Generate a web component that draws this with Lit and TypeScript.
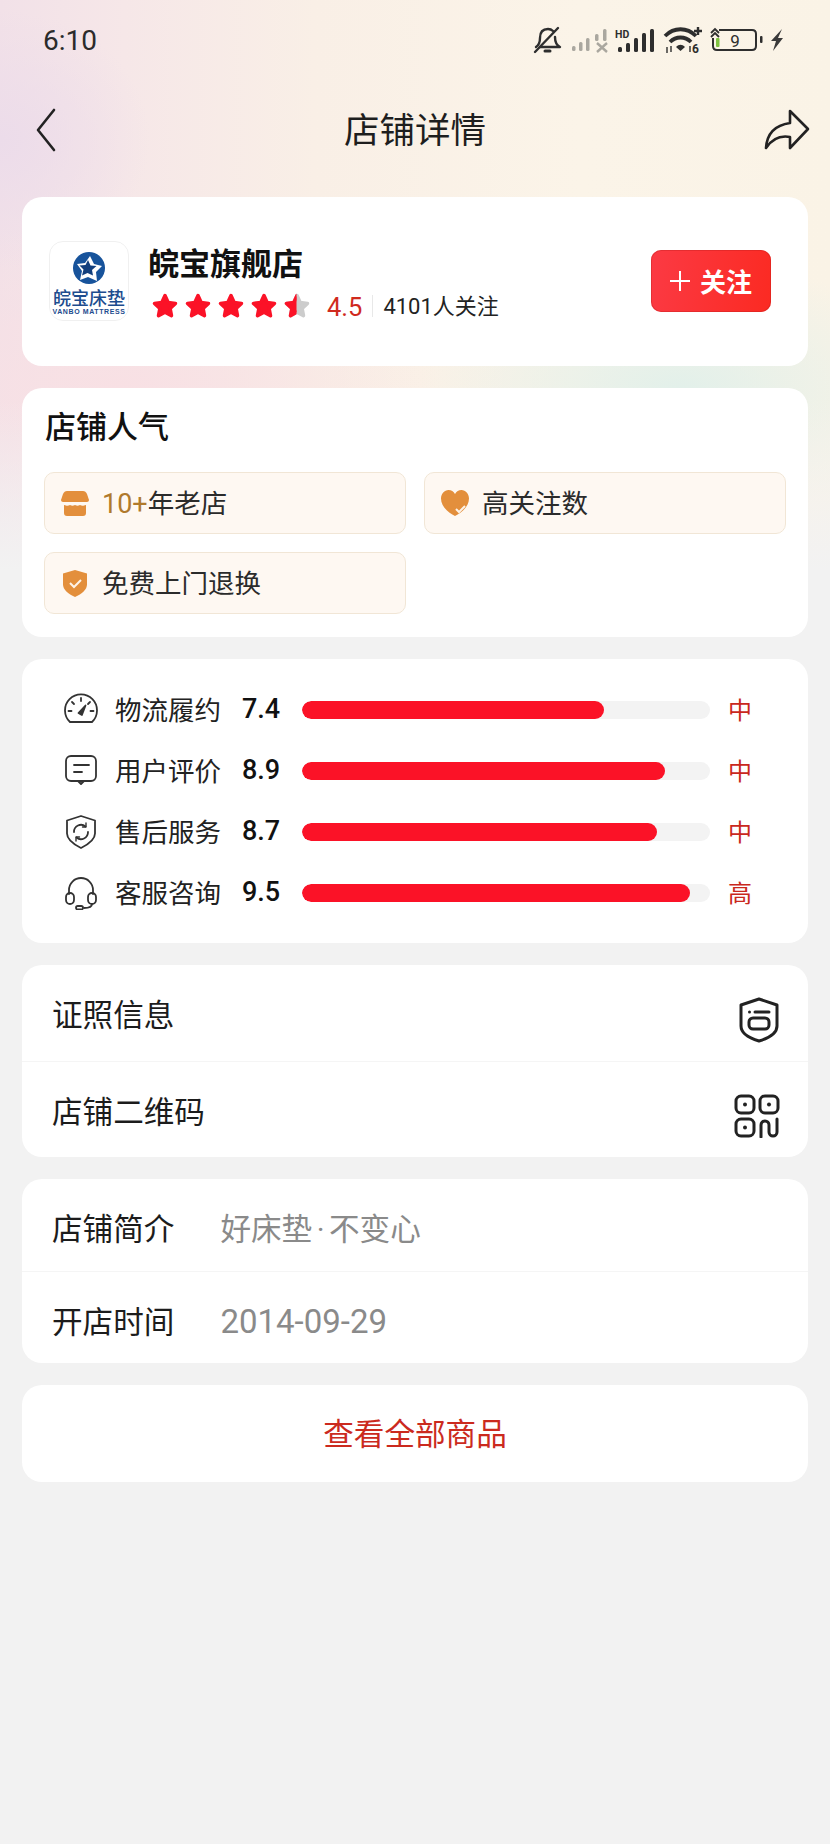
import { LitElement, html, css, svg } from 'lit';
import { customElement } from 'lit/decorators.js';

const STAR = 'M14 3.500l3.200 7 7.300.9-5.400 5 1.400 7.300-6.500-3.600-6.500 3.600 1.400-7.300-5.400-5 7.300-.9z';

const metricIcons = [
  svg`<path d="M6 29a16 16 0 1 1 22 0z" /><path d="M17 5v3M4.500 18h3M29.500 18h-3M8 9l2 2M26 9l-2 2" /><path d="M14.500 20l7-7.500-3.600 9.500z" fill="#333" />`,
  svg`<rect x="2" y="2" width="30" height="25" rx="5" /><path d="M10 11h15M10 18h8" /><path d="M14 27l3 3 3-3" />`,
  svg`<path d="M17 1l14 4.500v13c0 6-7 11-14 14.500-7-3.500-14-8.500-14-14.500v-13z" /><path d="M10 17a7 7 0 0 1 11.500-5.500M24 17a7 7 0 0 1-11.500 5.500" /><path d="M22 8v4h-3.500M12 26v-4h3.500" stroke-width="1.400" />`,
  svg`<path d="M5 18v-4a12 12 0 0 1 24 0v4" /><rect x="2" y="17" width="8" height="11" rx="4" /><rect x="24" y="17" width="8" height="11" rx="4" /><path d="M28 28c0 3-3 4-8 4" /><rect x="12" y="30" width="7" height="3.500" rx="1.750" />`,
];

const metrics = [
  { name: '物流履约', score: '7.4', pct: 74, level: '中' },
  { name: '用户评价', score: '8.9', pct: 89, level: '中' },
  { name: '售后服务', score: '8.7', pct: 87, level: '中' },
  { name: '客服咨询', score: '9.5', pct: 95, level: '高' },
];

@customElement('app-root')
export class AppRoot extends LitElement {
  static styles = css`
    :host {
      display: block;
      min-height: 1844px;
      font-family: 'Noto Sans CJK SC', 'Noto Sans', sans-serif;
      color: #1c1c1c;
      background:
        linear-gradient(to bottom, rgba(242, 242, 242, 0) 400px, #f2f2f2 570px),
        radial-gradient(150px 130px at 0 140px, #ecdcea, rgba(236, 220, 234, 0)),
        radial-gradient(260px 130px at 680px 390px, #e2f0ea, rgba(226, 240, 234, 0)),
        radial-gradient(320px 170px at 120px 390px, #f8e0e4, rgba(248, 224, 228, 0)),
        linear-gradient(90deg, #f2e1e8 0, #f6e7e8 15%, #f9efe6 38%, #fbf4e8 70%, #faf3e6 100%);
    }
    .status {
      height: 70px;
      display: flex;
      align-items: center;
      justify-content: space-between;
      padding: 0 30px 0 43px;
    }
    .time {
      font: 400 28px Roboto, sans-serif;
      color: #2b2b2b;
      margin-top: 11px;
    }
    .status-icons {
      display: block;
    }
    .nav {
      height: 120px;
      margin-bottom: 7px;
      padding: 0 20px;
      display: grid;
      grid-template-columns: 1fr auto 1fr;
      align-items: center;
    }
    .nav svg:first-child {
      margin-left: 14px;
    }
    .nav svg:last-child {
      justify-self: end;
    }
    .nav h1 {
      margin: 0;
      padding-bottom: 4px;
      font-size: 35.500px;
      font-weight: 400;
      line-height: 1;
      color: #1e1e1e;
    }
    .cards {
      display: flex;
      flex-direction: column;
      gap: 22px;
      padding: 0 22px;
    }
    .card {
      background: #fff;
      border-radius: 20px;
      overflow: hidden;
    }
    .shop {
      height: 169px;
      box-sizing: border-box;
      padding: 0 37px 2px 27px;
      display: flex;
      align-items: center;
    }
    .logo {
      width: 80px;
      height: 80px;
      box-sizing: border-box;
      border: 1px solid #f0f0f0;
      border-radius: 14px;
      display: flex;
      flex-direction: column;
      align-items: center;
      color: #1d4c8e;
      flex: none;
    }
    .logo svg {
      display: block;
      margin-top: 9px;
    }
    .logo-cn {
      font-size: 18px;
      font-weight: 500;
      line-height: 20px;
      margin-top: 2px;
      white-space: nowrap;
    }
    .logo-en {
      font: 700 7px/9px 'Liberation Sans', sans-serif;
      letter-spacing: 0.6px;
      white-space: nowrap;
    }
    .shop-info {
      margin-left: 19px;
      flex: 1;
    }
    .shop-name {
      font-size: 31px;
      font-weight: 700;
      line-height: 40px;
      color: #111;
    }
    .rating {
      display: flex;
      align-items: center;
      height: 34px;
      margin: 7px 0 -3px;
    }
    .stars {
      display: flex;
      gap: 5px;
      margin-left: 3px;
    }
    .stars svg {
      display: block;
    }
    .rate {
      font: 400 25.500px Roboto, sans-serif;
      color: #d02a1e;
      margin-left: 16px;
      padding-top: 3px;
    }
    .sep {
      width: 1px;
      height: 22px;
      background: #e8e8e8;
      margin: 0 10px;
    }
    .fans {
      font-size: 22px;
      color: #222;
      padding-bottom: 4px;
    }
    .fans b {
      font: 400 22px Roboto, sans-serif;
    }
    .follow {
      width: 120px;
      height: 62px;
      border: 0;
      padding: 0;
      border-radius: 10px;
      background: linear-gradient(100deg, #fb3a44, #fb2a22);
      box-shadow: inset 0 0 0 1px rgba(190, 30, 30, 0.35);
      color: #fff;
      font-family: inherit;
      font-size: 26px;
      font-weight: 700;
      display: flex;
      align-items: center;
      justify-content: center;
      gap: 10px;
    }
    .popular {
      height: 249px;
      box-sizing: border-box;
      padding: 22px 22px 0;
    }
    .popular h2 {
      margin: -2px 0 30px 1px;
      font-size: 31px;
      font-weight: 500;
      line-height: 34px;
      color: #111;
    }
    .tags {
      display: grid;
      grid-template-columns: 1fr 1fr;
      gap: 18px;
    }
    .tag {
      height: 62px;
      box-sizing: border-box;
      border: 1px solid #f1e6d6;
      border-radius: 10px;
      background: #fef8f2;
      display: flex;
      align-items: center;
      padding-left: 16px;
      gap: 13px;
      font-size: 26.500px;
      color: #2b2b2b;
    }
    .tag svg {
      flex: none;
    }
    .tag span {
      padding-bottom: 4px;
    }
    .tag em {
      font: 400 27px Roboto, sans-serif;
      color: #b07a2c;
    }
    .metrics {
      height: 284px;
      box-sizing: border-box;
      padding: 20px 0 20px 42px;
    }
    .metric {
      height: 61px;
      display: flex;
      align-items: center;
    }
    .metric svg {
      flex: none;
      fill: none;
      stroke: #333;
      stroke-width: 1.800;
      stroke-linecap: round;
      stroke-linejoin: round;
    }
    .metric-name {
      width: 106px;
      margin-left: 17px;
      padding-bottom: 2px;
      font-size: 26.500px;
      color: #222;
      white-space: nowrap;
    }
    .metric-score {
      width: 60px;
      margin-left: 21px;
      padding-bottom: 2px;
      font: 500 27px Roboto, sans-serif;
      color: #111;
    }
    .track {
      width: 408px;
      height: 18px;
      border-radius: 9px;
      background: #f3f3f3;
      overflow: hidden;
    }
    .fill {
      height: 100%;
      border-radius: 9px;
      background: #fb1227;
    }
    .metric-level {
      margin-left: 18px;
      padding-bottom: 2px;
      font-size: 24px;
      color: #c9281d;
    }
    .row {
      box-sizing: border-box;
      display: flex;
      align-items: center;
      padding: 0 28px 0 30px;
      font-size: 30.600px;
      color: #1c1c1c;
      justify-content: space-between;
    }
    .row + .row {
      border-top: 1px solid #f5f5f5;
    }
    .row-link {
      height: 96px;
    }
    .row-link svg {
      margin-top: 13px;
    }
    .row-info {
      height: 92px;
      padding-top: 4px;
      justify-content: flex-start;
    }
    .row-value {
      margin-left: 46px;
      color: #8a8a8a;
    }
    .row-value i {
      font: 400 30px Roboto, sans-serif;
      margin: 0 4.500px;
    }
    .row-value.num {
      font: 400 33px Roboto, sans-serif;
      padding-top: 4px;
    }
    .all {
      height: 97px;
      padding-bottom: 4px;
      box-sizing: border-box;
      display: flex;
      align-items: center;
      justify-content: center;
      font-size: 30.600px;
      color: #cb2a1e;
    }
  `;

  private renderStatusIcons() {
    return html`<svg class="status-icons" width="270" height="40" viewBox="530 15 270 40" fill="none">
      <g stroke="#2e2e2e" stroke-width="2.400" stroke-linecap="round" stroke-linejoin="round">
        <path d="M536 47c3-2 4-4 4-9 0-6 3-9 8-9 2 0 4 1 5 2M555 37c0 5 1 8 5 10H540" />
        <path d="M535 52L558 28" />
        <path d="M545 51h5" stroke-width="3" />
      </g>
      <g fill="#aaa79f">
        <rect x="572" y="46" width="3.500" height="5" rx="1.500" />
        <rect x="579" y="42" width="3.500" height="9" rx="1.500" />
        <rect x="586" y="38" width="3.500" height="13" rx="1.500" />
        <rect x="595" y="34" width="3.500" height="7" rx="1.500" />
        <rect x="603" y="29" width="3.500" height="12" rx="1.500" />
      </g>
      <path d="M597 43l10 9M607 43l-10 9" stroke="#aaa79f" stroke-width="2.400" />
      <text x="615" y="37.500" font-family="Roboto, sans-serif" font-size="10.500" font-weight="700" fill="#2e2e2e">HD</text>
      <g fill="#2e2e2e">
        <rect x="618" y="47" width="4" height="5" rx="1.500" />
        <rect x="626" y="43" width="4" height="9" rx="1.500" />
        <rect x="634" y="38" width="4" height="14" rx="1.500" />
        <rect x="642" y="33" width="4" height="19" rx="1.500" />
        <rect x="650" y="29" width="4" height="23" rx="1.500" />
      </g>
      <g stroke="#2e2e2e" stroke-width="3.800" fill="none">
        <path d="M665 36c9-9 22-9 31 0" />
        <path d="M670 42c6-6 15-6 21 0" />
      </g>
      <path d="M676 47c3-3 6-3 9 0l-4.500 4z" fill="#2e2e2e" />
      <path d="M694 31h8M698 27v8" stroke="#2e2e2e" stroke-width="2.400" />
      <path d="M667 47v6M671 46v6M690 46v6" stroke="#2e2e2e" stroke-width="1.400" />
      <text x="692" y="53" font-family="Roboto, sans-serif" font-size="12" font-weight="700" fill="#2e2e2e">6</text>
      <path d="M711 33l4-4 4 4M711 37l4-4 4 4" stroke="#2e2e2e" stroke-width="1.800" />
      <path d="M713 38v8c0 3 2 4 4 4h35c3 0 4-2 4-4v-12c0-3-2-4-4-4h-33" stroke="#2e2e2e" stroke-width="2" />
      <rect x="716" y="38" width="3.500" height="9" rx="1" fill="#7fc241" />
      <text x="735" y="47" text-anchor="middle" font-family="Roboto, sans-serif" font-size="17" fill="#2e2e2e">9</text>
      <rect x="760" y="36" width="2.500" height="7" rx="1" fill="#2e2e2e" />
      <path d="M782 29l-11 12h5l-3 10 10-13h-5z" fill="#3a3a3a" />
    </svg>`;
  }

  private renderStar(color: string, half = false) {
    return html`<svg width="28" height="28" viewBox="0 0 28 28">
      ${half
        ? svg`<clipPath id="half"><rect width="13.500" height="28" /></clipPath>
            <path d=${STAR} fill="#cccccc" stroke="#cccccc" stroke-width="3.500" stroke-linejoin="round" />
            <path d=${STAR} fill=${color} stroke=${color} stroke-width="3.500" stroke-linejoin="round" clip-path="url(#half)" />`
        : svg`<path d=${STAR} fill=${color} stroke=${color} stroke-width="3.500" stroke-linejoin="round" />`}
    </svg>`;
  }

  render() {
    return html`
      <div class="status">
        <span class="time">6:10</span>
        ${this.renderStatusIcons()}
      </div>
      <div class="nav">
        <svg width="24" height="46" viewBox="0 0 24 46" fill="none" stroke="#222" stroke-width="2.600" stroke-linecap="round" stroke-linejoin="round">
          <path d="M20 3L4 23l16 20" />
        </svg>
        <h1>店铺详情</h1>
        <svg width="46" height="42" viewBox="0 0 46 42" fill="none" stroke="#222" stroke-width="2.600" stroke-linejoin="round">
          <path d="M26 2l18 18-18 19v-11C15 26 8 30 2 39c1-15 10-23 24-25z" />
        </svg>
      </div>
      <div class="cards">
        <section class="card shop">
          <div class="logo">
            <svg width="34" height="34" viewBox="0 0 34 34">
              <circle cx="17" cy="17" r="16" fill="#17539b" />
              <path d="M18 5l4 8 8 2-6 6 1 9-9-4-8 3 2-9-5-7 8-1z" fill="#fff" />
              <path d="M16 9l2.500 5.500 6 .5-4.500 4 1 5.500-5.500-2.500-5.500 2.500 1.500-6-4-4 6-.5z" fill="#123f7d" />
            </svg>
            <span class="logo-cn">皖宝床垫</span>
            <span class="logo-en">VANBO MATTRESS</span>
          </div>
          <div class="shop-info">
            <div class="shop-name">皖宝旗舰店</div>
            <div class="rating">
              <div class="stars">
                ${this.renderStar('#fb1227')}${this.renderStar('#fb1227')}${this.renderStar('#fb1227')}${this.renderStar('#fb1227')}${this.renderStar('#fb1227', true)}
              </div>
              <span class="rate">4.5</span>
              <span class="sep"></span>
              <span class="fans"><b>4101</b>人关注</span>
            </div>
          </div>
          <button class="follow">
            <svg width="20" height="20" viewBox="0 0 20 20" stroke="#fff" stroke-width="2"><path d="M0 10h20M10 0v20" /></svg>
            关注
          </button>
        </section>

        <section class="card popular">
          <h2>店铺人气</h2>
          <div class="tags">
            <div class="tag">
              <svg width="28" height="26" viewBox="0 0 28 26" fill="#e38f3c">
                <path d="M6 1h16c2 0 3 1 4 3l2 6c0 1-1 2-2 2H2c-1 0-2-1-2-2l2-6c1-2 2-3 4-3z" />
                <path d="M3 15c3 1 4 1 6 0 2 1 3 1 5 0 2 1 3 1 5 0 2 1 3 1 6 0v8c0 2-1 3-3 3H6c-2 0-3-1-3-3z" />
              </svg>
              <span><em>10+</em>年老店</span>
            </div>
            <div class="tag">
              <svg width="28" height="26" viewBox="0 0 28 26">
                <path d="M14 26C8 23 0 17 0 8.500 0 4 3.500 0 7.500 0c3 0 5 1.500 6.500 4 1.500-2.500 3.500-4 6.500-4C24.500 0 28 4 28 8.500 28 17 20 23 14 26z" fill="#e38f3c" />
                <path d="M15 19l3 3 6-6" fill="none" stroke="#fdf3e8" stroke-width="2" />
              </svg>
              <span>高关注数</span>
            </div>
            <div class="tag">
              <svg width="28" height="28" viewBox="0 0 28 28">
                <path d="M14 1l12 3.500v11c0 5-5 9.500-12 12.500C7 25 2 20.500 2 15.500v-11z" fill="#e38f3c" />
                <path d="M9 14l4 4 7-7" fill="none" stroke="#fdf3e8" stroke-width="2" />
              </svg>
              <span>免费上门退换</span>
            </div>
          </div>
        </section>

        <section class="card metrics">
          ${metrics.map(
            (m, i) => html`<div class="metric">
              <svg width="34" height="34" viewBox="0 0 34 34">${metricIcons[i]}</svg>
              <span class="metric-name">${m.name}</span>
              <span class="metric-score">${m.score}</span>
              <div class="track"><div class="fill" style="width:${m.pct}%"></div></div>
              <span class="metric-level">${m.level}</span>
            </div>`,
          )}
        </section>

        <section class="card">
          <div class="row row-link">
            <span>证照信息</span>
            <svg width="42" height="46" viewBox="0 0 42 46" fill="none" stroke="#222" stroke-width="3" stroke-linejoin="round">
              <path d="M21 2l18 6v21c0 7-8 12-18 15C11 41 3 36 3 29V8z" />
              <path d="M17 15h14" stroke-linecap="round" />
              <circle cx="11.500" cy="15" r="1.500" fill="#222" stroke="none" />
              <rect x="11" y="21" width="20" height="11" rx="4" />
            </svg>
          </div>
          <div class="row row-link">
            <span>店铺二维码</span>
            <svg width="46" height="44" viewBox="0 0 46 44" fill="none" stroke="#222" stroke-width="3">
              <rect x="2" y="2" width="18" height="17" rx="5" />
              <rect x="26" y="2" width="18" height="17" rx="5" />
              <rect x="2" y="25" width="18" height="17" rx="5" />
              <circle cx="11" cy="10.500" r="2" fill="#222" stroke="none" />
              <circle cx="35" cy="10.500" r="2" fill="#222" stroke="none" />
              <circle cx="11" cy="33.500" r="2" fill="#222" stroke="none" />
              <path d="M27 43V31a4 4 0 0 1 8 0v7a4 4 0 0 0 8 0V25" stroke-linecap="round" />
            </svg>
          </div>
        </section>

        <section class="card">
          <div class="row row-info">
            <span>店铺简介</span>
            <span class="row-value">好床垫<i>·</i>不变心</span>
          </div>
          <div class="row row-info">
            <span>开店时间</span>
            <span class="row-value num">2014-09-29</span>
          </div>
        </section>

        <section class="card all">查看全部商品</section>
      </div>
    `;
  }
}
